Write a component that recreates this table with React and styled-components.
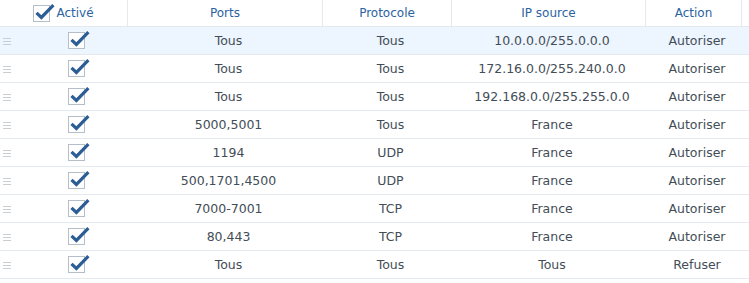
import React from "react";
import styled, { createGlobalStyle } from "styled-components";

const GlobalStyle = createGlobalStyle`
  body {
    margin: 0;
    background: #ffffff;
    font-family: "DejaVu Sans", Verdana, sans-serif;
  }
`;

const rules = [
  { ports: "Tous", protocol: "Tous", source: "10.0.0.0/255.0.0.0", action: "Autoriser" },
  { ports: "Tous", protocol: "Tous", source: "172.16.0.0/255.240.0.0", action: "Autoriser" },
  { ports: "Tous", protocol: "Tous", source: "192.168.0.0/255.255.0.0", action: "Autoriser" },
  { ports: "5000,5001", protocol: "Tous", source: "France", action: "Autoriser" },
  { ports: "1194", protocol: "UDP", source: "France", action: "Autoriser" },
  { ports: "500,1701,4500", protocol: "UDP", source: "France", action: "Autoriser" },
  { ports: "7000-7001", protocol: "TCP", source: "France", action: "Autoriser" },
  { ports: "80,443", protocol: "TCP", source: "France", action: "Autoriser" },
  { ports: "Tous", protocol: "Tous", source: "Tous", action: "Refuser" },
];

const columns = "128px 195px 129px 194px 96px 1fr";

const Table = styled.div`
  width: 749px;
`;

const HeaderRow = styled.div`
  display: grid;
  grid-template-columns: ${columns};
  height: 27px;
  border-bottom: 1px solid #e3e9ef;
  box-sizing: border-box;
  font-size: 12px;
`;

const HeaderCell = styled.div`
  display: flex;
  align-items: center;
  justify-content: center;
  gap: 6px;
  color: #2a63a2;
  border-right: ${(p) => (p.$last ? "none" : "1px solid #e3e9ef")};
`;

const Row = styled.div`
  display: grid;
  grid-template-columns: ${columns};
  height: 28px;
  border-bottom: 1px solid #e3e9ef;
  box-sizing: border-box;
  font-size: 12.5px;
  background: ${(p) => (p.$selected ? "#edf5fe" : "#ffffff")};
`;

const Cell = styled.div`
  display: flex;
  align-items: center;
  justify-content: center;
  padding-left: 6px;
  color: #434d57;
`;

const FirstCell = styled.div`
  position: relative;
  display: flex;
  align-items: center;
  justify-content: center;
  padding-left: 24px;
`;

const Handle = styled.span`
  position: absolute;
  left: 3px;
  top: 50%;
  width: 8px;
  height: 7px;
  margin-top: -3px;
  border-top: 1px solid #c9ced4;
  border-bottom: 1px solid #c9ced4;
  box-sizing: border-box;

  &::after {
    content: "";
    position: absolute;
    left: 0;
    right: 0;
    top: 2px;
    border-top: 1px solid #c9ced4;
  }
`;

const Box = styled.span`
  position: relative;
  display: inline-block;
  width: 17px;
  height: 17px;
  border: 1px solid #b4bfca;
  background: #ffffff;
  box-sizing: border-box;

  svg {
    position: absolute;
    left: 1px;
    top: -3px;
  }
`;

const Checkbox = () => (
  <Box>
    <svg width="20" height="17" viewBox="0 0 20 17">
      <path d="M1.5 9.8 L6.4 14.4 L18.4 2.2" fill="none" stroke="#2d5d95" strokeWidth="3.2" strokeLinejoin="miter" />
    </svg>
  </Box>
);

const App = () => (
  <>
    <GlobalStyle />
    <Table>
      <HeaderRow>
        <HeaderCell>
          <Checkbox />
          <span>Activé</span>
        </HeaderCell>
        <HeaderCell>Ports</HeaderCell>
        <HeaderCell>Protocole</HeaderCell>
        <HeaderCell>IP source</HeaderCell>
        <HeaderCell>Action</HeaderCell>
        <HeaderCell $last />
      </HeaderRow>
      {rules.map((r, i) => (
        <Row key={i} $selected={i === 0}>
          <FirstCell>
            <Handle />
            <Checkbox />
          </FirstCell>
          <Cell>{r.ports}</Cell>
          <Cell>{r.protocol}</Cell>
          <Cell>{r.source}</Cell>
          <Cell>{r.action}</Cell>
          <Cell />
        </Row>
      ))}
    </Table>
  </>
);

export default App;
